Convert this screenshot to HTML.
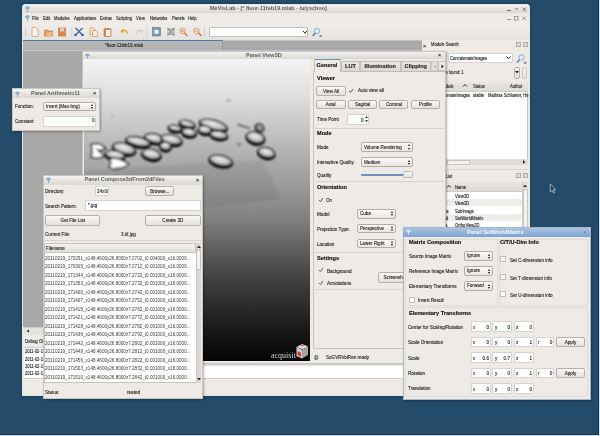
<!DOCTYPE html>
<html><head><meta charset="utf-8">
<style>
*{box-sizing:border-box;margin:0;padding:0}
.l,.t,.mi{-webkit-text-stroke:.12px #222}
body{width:600px;height:436px;background:#244c6a;position:relative;overflow:hidden;font-family:"Liberation Sans",sans-serif;font-size:4.6px;color:#222}
.a{position:absolute}
.win{position:absolute;background:#eeebe7;box-shadow:1px 1px 2px rgba(0,0,0,.3)}
.tb{position:absolute;background:linear-gradient(#f3f2f0,#dbd8d3)}
.tt{position:absolute;font-weight:bold;color:#5c5c5c;font-size:5.5px;white-space:nowrap;line-height:1}
.btn{position:absolute;padding-top:0;background:linear-gradient(#faf9f7,#e4e1dc);border:1px solid #b4b0aa;border-radius:2px;text-align:center;white-space:nowrap;color:#222}
.inp{position:absolute;background:#fff;border:1px solid #d6d3ce;border-radius:1px;white-space:nowrap}
.cmb{position:absolute;padding-top:.2px;background:linear-gradient(#fbfaf8,#e9e6e1);border:1px solid #b0aca6;border-radius:2px;white-space:nowrap;padding-left:2px}
.cmb:before{content:"";position:absolute;right:2px;top:50%;margin-top:-2.6px;border-left:1.6px solid transparent;border-right:1.6px solid transparent;border-bottom:2.1px solid #111}.cmb:after{content:"";position:absolute;right:2px;top:50%;margin-top:0.6px;border-left:1.6px solid transparent;border-right:1.6px solid transparent;border-top:2.1px solid #111}
.l{position:absolute;white-space:nowrap;color:#222;line-height:1;margin-top:.9px;font-size:5.2px;transform:scaleX(.885);transform-origin:0 0}
.v{transform-origin:100% 0}
.t{display:inline-block;font-size:5.2px;transform:scaleX(.885)}
.tl{transform-origin:0 50%}
.inp .t{position:relative;top:-.6px}
.b{position:absolute;white-space:nowrap;font-weight:bold;color:#111;font-size:5.6px;line-height:1;-webkit-text-stroke:.15px #111}
.sep{position:absolute;height:1px;background:#d6d3ce}
.ds{font-size:4.7px}
.mi{position:absolute;white-space:nowrap;color:#1a1a1a;line-height:1;top:15.6px;font-size:5.2px;transform:scaleX(.8);transform-origin:0 0}
#wrap{position:absolute;left:0;top:0;width:600px;height:436px;background:#244c6a;filter:blur(.3px)}
</style></head><body><div id="wrap">

<svg class="a" style="left:548px;top:182px" width="10" height="13"><path d="M2.3 2v8l1.9-1.7 1.3 2.7 1-.5-1.2-2.7 2.3-.2z" fill="#1e2f40" stroke="#a9bdcd" stroke-width=".9"/></svg>
<!-- ================= MAIN WINDOW ================= -->
<div class="win" style="left:22px;top:4px;width:508px;height:392px;border-radius:3px 3px 0 0;border:1px solid #dfe6ee;box-shadow:0 0 3px rgba(0,0,0,.35)"></div>
<div class="tb" style="left:23px;top:5px;width:506px;height:8px;border-radius:3px 3px 0 0"></div>
<div class="tt" style="left:210px;top:6.4px">MeVisLab - [* fluor-11feb19.mlab - /u/yschoo]</div>
<svg class="a" style="left:24px;top:5px" width="8" height="18"><g fill="#8fb0cc"><ellipse cx="3.5" cy="2.8" rx="2.4" ry="1.7"/><rect x="3" y="4" width="1.1" height="3.5"/><ellipse cx="3.5" cy="11.8" rx="2.4" ry="1.7"/><rect x="3" y="13" width="1.1" height="3.5"/></g></svg>
<svg class="a" style="left:505px;top:5px" width="24" height="18"><g fill="none" stroke="#555" stroke-width=".8"><path d="M2 5.5h4"/><path d="M10 4.5l1.5-1.5 1.5 1.5"/><path d="M17.5 2.5l3.5 3.5M21 2.5l-3.5 3.5"/></g><g fill="none" stroke="#888" stroke-width=".8"><path d="M2 14.5h4"/><rect x="9.5" y="11.5" width="3.5" height="3.5"/><path d="M17.5 11.5l3.5 3.5M21 11.5l-3.5 3.5"/></g></svg>
<!-- menubar -->
<div class="mi" style="left:31.7px">File</div>
<div class="mi" style="left:42.5px">Edit</div>
<div class="mi" style="left:54px">Modules</div>
<div class="mi" style="left:73.7px">Applications</div>
<div class="mi" style="left:100px">Extras</div>
<div class="mi" style="left:116.4px">Scripting</div>
<div class="mi" style="left:136.4px">View</div>
<div class="mi" style="left:149.6px">Networks</div>
<div class="mi" style="left:171.6px">Panels</div>
<div class="mi" style="left:188.4px">Help</div>

<!-- toolbar -->
<div class="a" style="left:22px;top:22.5px;width:508px;height:17px;background:linear-gradient(#efedea,#e6e3df)"></div>
<svg class="a" style="left:22px;top:22px;filter:blur(.3px)" width="300" height="18">
 <g fill="#b9b5ae"><rect x="3" y="5" width="1" height="1"/><rect x="3" y="7" width="1" height="1"/><rect x="3" y="9" width="1" height="1"/><rect x="3" y="11" width="1" height="1"/><rect x="3" y="13" width="1" height="1"/></g>
 <!-- new -->
 <path d="M10 5.5h4l2 2v7h-6z" fill="#fbf4ee" stroke="#e0a27a" stroke-width="0.9"/>
 <!-- open -->
 <path d="M22.5 8h3l1 1h4v5h-8z" fill="#e39a5e" stroke="#c2713a" stroke-width="0.6"/>
 <path d="M23.5 14l2-4h6l-2 4z" fill="#f2b57e"/>
 <!-- save -->
 <rect x="36.5" y="6" width="7" height="8" fill="#e0884a" stroke="#b86a36" stroke-width="0.6"/>
 <rect x="38" y="6.3" width="4" height="3" fill="#d8d8d8"/>
 <rect x="49.5" y="5" width="0.8" height="10" fill="#cfcbc5"/>
 <!-- cut -->
 <path d="M53.5 6l7 7M60.5 6l-7 7" stroke="#2d6aa8" stroke-width="1.3"/>
 <circle cx="53.5" cy="13" r="1.3" fill="#2d6aa8"/><circle cx="60.5" cy="13" r="1.3" fill="#2d6aa8"/>
 <!-- copy -->
 <path d="M68 6h3.5l1.5 1.5v5h-5z" fill="#fbeee2" stroke="#e0965e" stroke-width="0.8"/>
 <path d="M70.5 8.5h3.5l1.5 1.5v4.5h-5z" fill="#fbeee2" stroke="#e0965e" stroke-width="0.8"/>
 <!-- paste -->
 <rect x="82" y="6.5" width="7" height="8" rx="1" fill="#d98a50" stroke="#b86a36" stroke-width="0.6"/>
 <rect x="84" y="8" width="4.5" height="6" fill="#fbeee2"/>
 <!-- undo -->
 <path d="M100 9.5 Q104 6.5 105.5 11.5" fill="none" stroke="#e8a838" stroke-width="1.6"/>
 <path d="M98.3 8.2l3.8 -0.6 -1.6 4z" fill="#e0a030"/>
 <!-- redo -->
 <path d="M120 9.5 Q116 6.5 114.5 11.5" fill="none" stroke="#cfccc7" stroke-width="1.5"/>
 <path d="M121.7 8.2l-3.8 -0.6 1.6 4z" fill="#cfccc7"/>
 <rect x="124.5" y="5" width="0.8" height="10" fill="#cfcbc5"/>
 <!-- fit -->
 <rect x="130.5" y="5.5" width="8" height="8.5" fill="#7e98ad" stroke="#5f7a90" stroke-width="0.6"/>
 <circle cx="134.5" cy="9.7" r="2.3" fill="#f4f6f8"/>
 <!-- fit2 -->
 <path d="M145.5 6l7 7.5M152.5 6l-7 7.5" stroke="#8a8f8a" stroke-width="1.2"/>
 <rect x="146" y="7" width="6" height="5.5" fill="none" stroke="#8a8f8a" stroke-width="0.8"/>
 <!-- zoom in -->
 <circle cx="160.5" cy="9" r="2.7" fill="#fbeee2" stroke="#d88a50" stroke-width="0.9"/>
 <path d="M162.5 11l3 3" stroke="#c0703a" stroke-width="1.3"/>
 <path d="M159 9h3M160.5 7.5v3" stroke="#b06030" stroke-width="0.6"/>
 <!-- zoom out -->
 <circle cx="174.5" cy="9" r="2.7" fill="#fbeee2" stroke="#d88a50" stroke-width="0.9"/>
 <path d="M176.5 11l3 3" stroke="#c0703a" stroke-width="1.3"/>
 <path d="M173 9h3" stroke="#b06030" stroke-width="0.6"/>
 <rect x="182" y="5" width="0.8" height="10" fill="#cfcbc5"/>
 <!-- search icon -->
 <circle cx="295" cy="9" r="2.6" fill="#e4eef6" stroke="#7aa4c8" stroke-width="0.9"/>
 <path d="M293.2 11l-2.5 3" stroke="#4a7aa8" stroke-width="1.3"/>
 <path d="M297.5 13l1.6 1.6M299.1 13v1.6h-1.6" stroke="#333" stroke-width="0.6" fill="none"/>
</svg>
<div class="inp" style="left:209px;top:27px;width:99px;height:10px;border-color:#c4c0ba"></div>
<svg class="a" style="left:302px;top:29px" width="6" height="6"><path d="M1 2l2 2.2 2-2.2" fill="none" stroke="#222" stroke-width="1"/></svg>

<!-- tab bar -->
<div class="a" style="left:23px;top:40px;width:399px;height:11px;background:#a9a9a9;border-top:1px solid #c2c2c2"></div>
<div class="a" style="left:23px;top:40px;width:200px;height:11px;background:linear-gradient(#b9b9b9,#b1b1b1);border-top:1.5px solid #4f7aa6;border-right:1px solid #9a9a9a"></div>
<div class="a" style="left:23px;top:50px;width:399px;height:1px;background:#c6c6c6"></div>
<div class="l" style="left:105px;top:42.5px;font-size:5px;color:#222">*fluor-11feb19.mlab</div>
<div class="l" style="left:423px;top:42px;color:#777;font-size:6px">×</div>
<!-- MDI -->
<div class="a" style="left:23.3px;top:51px;width:406px;height:276px;background:#a8a8a8"></div>
<!-- MDI h-scrollbar -->
<div class="a" style="left:24px;top:327px;width:405px;height:8px;background:#e5e2dd;border-top:1px solid #cfccc7"></div>
<svg class="a" style="left:25px;top:328px" width="6" height="6"><path d="M4 1.5v3l-2.2-1.5z" fill="#222"/></svg>

<!-- Debug output dock -->
<div class="l" style="left:25px;top:339px;font-size:4.9px">Debug Output</div>
<div class="a" style="left:24px;top:347px;width:504px;height:32px;background:#fff;border-top:1px solid #cfccc7"></div>
<div class="l" style="left:25px;top:349.5px;font-size:4.5px">2011-02-19 17:16:51</div>
<div class="l" style="left:25px;top:357px;font-size:4.5px">2011-02-19 17:16:51</div>
<div class="l" style="left:25px;top:364px;font-size:4.5px">2011-02-19 17:16:52</div>
<div class="l" style="left:25px;top:371.5px;font-size:4.5px">2011-02-19 17:16:52</div>
<div class="a" style="left:24px;top:378px;width:504px;height:1px;background:#d0cdc8"></div>

<!-- Module Search dock -->
<div class="l ds" style="left:431px;top:42.5px">Module Search</div>
<div class="a" style="left:516px;top:42px;width:5px;height:5px;border:0.8px solid #b0aca6;background:#ddd9d4"></div>
<div class="a" style="left:523px;top:42px;width:5px;height:5px;border:0.8px solid #b0aca6;background:#ddd9d4"></div>
<div class="inp" style="left:447.5px;top:53px;width:65px;height:9.5px;padding-left:1.5px;line-height:9px"><span class="t tl" style="font-size:4.7px;top:-.2px">ConcatenateImages</span></div>
<svg class="a" style="left:505px;top:55px" width="7" height="6"><path d="M1.5 1.5l2 2.2 2-2.2" fill="none" stroke="#222" stroke-width="1"/></svg>
<svg class="a" style="left:515px;top:53px" width="13" height="12"><circle cx="6.5" cy="4.5" r="2.7" fill="#e4eef6" stroke="#7aa4c8" stroke-width="0.9"/><path d="M4.6 6.6l-2.6 3" stroke="#4a7aa8" stroke-width="1.3"/><path d="M9 8.5l1.8 1.8M10.8 8.5v1.8h-1.8" stroke="#333" stroke-width="0.6" fill="none"/></svg>
<div class="l ds" style="left:432px;top:70.5px">Modules found: 1</div>
<div class="btn" style="left:514px;top:66.5px;width:6px;height:12px"></div>
<svg class="a" style="left:514px;top:70px" width="6" height="5"><path d="M1 1h4l-2 2.5z" fill="#222"/></svg>
<div class="btn" style="left:521.5px;top:66.5px;width:5.5px;height:12px;opacity:.6"></div>
<div class="a" style="left:432px;top:81.5px;width:96px;height:78px;background:#fff;border:1px solid #c8c4be"></div>
<div class="a" style="left:432px;top:81.5px;width:96px;height:10px;background:linear-gradient(#eae7e3,#dedad5);border-bottom:1px solid #cfcbc5"></div>
<div class="l ds" style="left:440px;top:84.3px">Module</div>
<svg class="a" style="left:462px;top:83px" width="6" height="5"><path d="M1 3.5l2-2 2 2" fill="none" stroke="#222" stroke-width="1"/></svg>
<div class="l ds" style="left:473px;top:84.3px">Status</div>
<div class="l ds" style="left:510px;top:84.3px">Author</div>
<div class="l ds" style="left:433px;top:93.4px">ConcatenateImages</div>
<div class="l ds" style="left:472.5px;top:93.4px">stable</div>
<div class="l ds" style="left:488px;top:93.4px">Mathias Schlueter, He</div>
<div class="a" style="left:432px;top:159px;width:96px;height:6px;background:#e0ddd8"></div>
<div class="a" style="left:447px;top:159.5px;width:23px;height:5px;background:#f4f3f1;border:0.6px solid #c8c4be"></div>
<svg class="a" style="left:521px;top:159px" width="6" height="6"><path d="M2 1v4l2.2-2z" fill="#222"/></svg>
<div class="a" style="left:432px;top:168.5px;width:96px;height:1px;background:#d8d5d0"></div>
<div class="l ds" style="left:431px;top:174.0px">Module List</div>
<div class="a" style="left:516px;top:173px;width:5px;height:5px;border:0.8px solid #b0aca6;background:#ddd9d4"></div>
<div class="a" style="left:523px;top:173px;width:5px;height:5px;border:0.8px solid #b0aca6;background:#ddd9d4"></div>
<div class="a" style="left:432px;top:182px;width:96px;height:60px;background:#fff;border:1px solid #c8c4be"></div>
<div class="a" style="left:432px;top:182px;width:90px;height:9.5px;background:linear-gradient(#eae7e3,#dedad5);border-bottom:1px solid #cfcbc5"></div>
<svg class="a" style="left:446px;top:184px" width="6" height="5"><path d="M1 3.5l2-2 2 2" fill="none" stroke="#222" stroke-width="1"/></svg>
<div class="l ds" style="left:455px;top:185.5px">Name</div>
<div class="a" style="left:432px;top:199px;width:90px;height:7.3px;background:#efedea"></div>
<div class="a" style="left:432px;top:213.6px;width:90px;height:7.3px;background:#efedea"></div>
<div class="l ds" style="left:455px;top:194.5px">View3D</div>
<div class="l ds" style="left:455px;top:201.5px">View2D</div>
<div class="l ds" style="left:455px;top:209.0px">SubImage</div>
<div class="l ds" style="left:444px;top:209px">ga</div><div class="l ds" style="left:444.5px;top:216.5px">al</div><div class="l ds" style="left:445px;top:223.5px">a</div>
<div class="l ds" style="left:455px;top:216.5px">SetWorldMatrix</div>
<div class="l ds" style="left:455px;top:223.5px">OrthoView2D</div>
<div class="a" style="left:522px;top:182px;width:6px;height:60px;background:#e3e0db;border-left:1px solid #d0ccc6"></div>
<svg class="a" style="left:522px;top:183px" width="6" height="6"><path d="M1 4l2-2.2 2 2.2z" fill="#222"/></svg>
<div class="a" style="left:522.5px;top:189px;width:5px;height:40px;background:#f4f3f1;border:0.6px solid #c8c4be"></div>

<!-- main status bar -->
<div class="a" style="left:23px;top:379px;width:506px;height:16px;background:#eeebe7"></div>


<!-- ================= PANEL VIEW3D ================= -->
<div class="win" style="left:81.5px;top:50.5px;width:364.5px;height:313.5px;border:1px solid #c9c6c1;background:#eeebe7"></div>
<div class="tb" style="left:82.5px;top:51.5px;width:362.5px;height:7.5px"></div>
<div class="tt" style="left:246px;top:52.5px">Panel View3D</div>
<svg class="a" style="left:84px;top:51.5px" width="8" height="8"><ellipse cx="3.5" cy="3" rx="2.3" ry="1.6" fill="#8aaccc"/><rect x="3" y="4" width="1" height="3" fill="#8aaccc"/></svg>
<div class="l" style="left:438px;top:51.5px;color:#555;font-size:6px">×</div>
<!-- viewer -->
<div class="a" style="left:83.5px;top:59px;width:226px;height:302px;background:linear-gradient(#f4f4f4 0%,#dcdcdc 13.6%,#adadad 33%,#989898 43%,#808080 53%,#5f5f5f 63%,#404040 73%,#181818 90%,#050505 100%)"></div>
<svg class="a" style="left:83.5px;top:59px" width="226" height="302">
 <defs>
  <radialGradient id="dg" cx="0.45" cy="0.35" r="0.65"><stop offset="0" stop-color="#ececec"/><stop offset="0.55" stop-color="#cdcdcd"/><stop offset="1" stop-color="#8a8a8a"/></radialGradient>
  <radialGradient id="dw" cx="0.45" cy="0.4" r="0.6"><stop offset="0" stop-color="#ffffff"/><stop offset="0.7" stop-color="#e8e8e8"/><stop offset="1" stop-color="#5a5a5a"/></radialGradient>
  <filter id="bl" x="-10%" y="-10%" width="120%" height="120%"><feGaussianBlur stdDeviation="1"/></filter><filter id="bl2"><feGaussianBlur stdDeviation="3"/></filter>
 </defs>
 <g transform="translate(-83.5,-59)">
 <path d="M83.5 170 L262 160 L281 199 L83.5 222z" fill="#000" opacity="0.06" filter="url(#bl)"/>
 <g filter="url(#bl)">
  <g transform="rotate(10 174.6 128.6)"><ellipse cx="174.6" cy="129.2" rx="7.6" ry="4.5" fill="#111"/><ellipse cx="174.4" cy="128.1" rx="6.1" ry="2.4" fill="url(#dg)" stroke="#222" stroke-width="1.2"/></g>
  <g transform="rotate(15 186.8 124.2)"><ellipse cx="186.8" cy="124.8" rx="8.8" ry="4.8" fill="#111"/><ellipse cx="186.60000000000002" cy="123.7" rx="7.3" ry="2.7" fill="url(#dg)" stroke="#222" stroke-width="1.2"/></g>
  <g transform="rotate(15 213 125.4)"><ellipse cx="213" cy="126.0" rx="15.1" ry="6.4" fill="#111"/><ellipse cx="212.8" cy="124.9" rx="13.6" ry="4.3" fill="url(#dg)" stroke="#222" stroke-width="1.2"/></g>
  <g transform="rotate(10 204.3 130)"><ellipse cx="204.3" cy="130.6" rx="7.6" ry="5.6" fill="#111"/><ellipse cx="204.10000000000002" cy="129.5" rx="6.1" ry="3.5" fill="url(#dg)" stroke="#222" stroke-width="1.2"/></g>
  <g transform="rotate(10 188.6 132.7)"><ellipse cx="188.6" cy="133.29999999999998" rx="8.2" ry="5.6" fill="#111"/><ellipse cx="188.4" cy="132.2" rx="6.7" ry="3.5" fill="url(#dg)" stroke="#222" stroke-width="1.2"/></g>
  <g transform="rotate(10 218.3 135.3)"><ellipse cx="218.3" cy="135.9" rx="9.9" ry="5.4" fill="#111"/><ellipse cx="218.10000000000002" cy="134.8" rx="8.4" ry="3.3" fill="url(#dg)" stroke="#222" stroke-width="1.2"/></g>
  <g transform="rotate(12 153.7 138.7)"><ellipse cx="153.7" cy="139.29999999999998" rx="10.6" ry="6.1" fill="#111"/><ellipse cx="153.5" cy="138.2" rx="9.1" ry="4.0" fill="url(#dg)" stroke="#222" stroke-width="1.2"/></g>
  <g transform="rotate(12 171 140)"><ellipse cx="171" cy="140.6" rx="11.6" ry="6.4" fill="#111"/><ellipse cx="170.8" cy="139.5" rx="10.1" ry="4.3" fill="url(#dg)" stroke="#222" stroke-width="1.2"/></g>
  <g transform="rotate(12 137.7 142)"><ellipse cx="137.7" cy="142.6" rx="13.3" ry="6.1" fill="#111"/><ellipse cx="137.5" cy="141.5" rx="11.8" ry="4.0" fill="url(#dg)" stroke="#222" stroke-width="1.2"/></g>
  <g transform="rotate(15 123.7 149)"><ellipse cx="123.7" cy="149.6" rx="12.6" ry="6.9" fill="#111"/><ellipse cx="123.5" cy="148.5" rx="11.1" ry="4.8" fill="url(#dg)" stroke="#222" stroke-width="1.2"/></g>
  <g transform="rotate(10 165 146.5)"><ellipse cx="165" cy="147.1" rx="6.6" ry="5.6" fill="#111"/><ellipse cx="164.8" cy="146.0" rx="5.1" ry="3.5" fill="url(#dg)" stroke="#222" stroke-width="1.2"/></g>
  <g transform="rotate(12 151 154.7)"><ellipse cx="151" cy="155.29999999999998" rx="10.6" ry="6.6" fill="#111"/><ellipse cx="150.8" cy="154.2" rx="9.1" ry="4.5" fill="url(#dg)" stroke="#222" stroke-width="1.2"/></g>
  <g transform="rotate(10 114.7 155.3)"><ellipse cx="114.7" cy="155.9" rx="10.9" ry="5.9" fill="#111"/><ellipse cx="114.5" cy="154.8" rx="9.4" ry="3.8" fill="url(#dg)" stroke="#222" stroke-width="1.2"/></g>
  <g transform="rotate(15 255 138)"><ellipse cx="255" cy="138.6" rx="10.2" ry="7.1" fill="#111"/><ellipse cx="254.8" cy="137.5" rx="8.7" ry="5.0" fill="url(#dg)" stroke="#222" stroke-width="1.2"/></g>
  <g transform="rotate(15 266 153)"><ellipse cx="266" cy="153.6" rx="9.6" ry="6.6" fill="#111"/><ellipse cx="265.8" cy="152.5" rx="8.1" ry="4.5" fill="url(#dg)" stroke="#222" stroke-width="1.2"/></g>
  <g transform="rotate(12 220.3 161)"><ellipse cx="220.3" cy="161.6" rx="12.6" ry="6.8" fill="#111"/><ellipse cx="220.10000000000002" cy="160.5" rx="11.1" ry="4.7" fill="url(#dg)" stroke="#222" stroke-width="1.2"/></g>
  <g transform="rotate(35 259 128)"><ellipse cx="259" cy="128" rx="5.2" ry="4.6" fill="#1a1a1a"/><ellipse cx="259" cy="127.5" rx="3.3" ry="2.6" fill="#9a9a9a"/></g>
  <path d="M90.5 144.5 Q99 142 105 148.5 Q101 151 97.5 150 L104 156.5 Q97 159 90.5 157 Q93 151 90.5 144.5z" fill="#fff" stroke="#1a1a1a" stroke-width="1.5"/>
  <path d="M108.5 159 Q117 156 128 164 Q124 168 118 168 Q112 170 108.5 167 Q112 163 108.5 159z" fill="#fff" stroke="#1a1a1a" stroke-width="1.5"/>
  <path d="M237 124.5 L249.5 128.5" stroke="#555" stroke-width="1.4"/>
  <ellipse cx="238.5" cy="144.3" rx="2.5" ry="1.4" fill="#777"/>
  <ellipse cx="228" cy="100.4" rx="2" ry="1.2" fill="#999"/>
  <ellipse cx="112" cy="116.7" rx="2" ry="1.5" fill="#bbb"/>
 </g>
</g>
 <text x="187" y="299" font-family="Liberation Serif" font-size="8" fill="#d8d8d8">acquisit</text>
 <path d="M212.5 288l5.5-3 6 2.5-5.5 3z" fill="#e0d8d8"/>
 <path d="M212.5 288l5.5 3v8.5l-5.5-2.5z" fill="#d4d0d0"/>
 <path d="M218 291l6-3.5v8.5l-6 3.5z" fill="#a8a4a4"/>
 <path d="M213.5 292l3.5 1.8v4l-3.5-1.8z" fill="#d83838"/>
 <path d="M216 286.5l2-1 2 1-2 1z" fill="#d85050"/>
</svg>
<!-- control side -->
<div class="a" style="left:313px;top:71px;width:132.5px;height:278px;border:1px solid #c8c4be;border-top-color:#bfbbb5"></div>
<div class="a" style="left:341px;top:60.5px;width:19px;height:10.5px;background:linear-gradient(#e8e6e2,#dcd9d4);border:1px solid #c4c0ba;border-bottom:0"></div>
<div class="a" style="left:360px;top:60.5px;width:41px;height:10.5px;background:linear-gradient(#e8e6e2,#dcd9d4);border:1px solid #c4c0ba;border-bottom:0"></div>
<div class="a" style="left:401px;top:60.5px;width:29.5px;height:10.5px;background:linear-gradient(#e8e6e2,#dcd9d4);border:1px solid #c4c0ba;border-bottom:0"></div>
<div class="a" style="left:430.5px;top:60.5px;width:7.5px;height:10.5px;background:#e4e1dc;border:1px solid #cfcbc5"></div>
<div class="a" style="left:438px;top:60.5px;width:7.5px;height:10.5px;background:#eeece8;border:1px solid #c4c0ba"></div>
<svg class="a" style="left:430.5px;top:60.5px" width="15" height="11"><path d="M5 3.5v4l-2-2z" fill="#bbb"/><path d="M10.5 3.5v4l2.2-2z" fill="#111"/></svg>
<div class="a" style="left:313.5px;top:59.3px;width:27.5px;height:12.5px;background:#eeebe7;border:1px solid #c4c0ba;border-bottom:0;border-top:1.5px solid #6a92c0"></div>
<div class="b" style="left:316.6px;top:63.4px">General</div>
<div class="b" style="left:345px;top:63.6px;color:#333">LUT</div>
<div class="b" style="left:364.5px;top:63.6px;color:#333">Illumination</div>
<div class="b" style="left:404.6px;top:63.6px;color:#333">Clipping</div>

<div class="b" style="left:317px;top:75.5px">Viewer</div>
<div class="btn" style="left:316px;top:86px;width:29.6px;height:10px;line-height:8px"><span class="t">View All</span></div>
<svg class="a" style="left:348px;top:88px" width="6" height="6"><path d="M1 3l1.5 1.5 2.5-3.5" fill="none" stroke="#333" stroke-width="0.8"/></svg>
<div class="l" style="left:358px;top:87.6px">Auto view all</div>
<div class="btn" style="left:316px;top:99.7px;width:29.6px;height:9.6px;line-height:7.6px"><span class="t">Axial</span></div>
<div class="btn" style="left:348px;top:99.7px;width:29px;height:9.6px;line-height:7.6px"><span class="t">Sagittal</span></div>
<div class="btn" style="left:379.4px;top:99.7px;width:29px;height:9.6px;line-height:7.6px"><span class="t">Coronal</span></div>
<div class="btn" style="left:410.8px;top:99.7px;width:29.2px;height:9.6px;line-height:7.6px"><span class="t">Profile</span></div>
<div class="l" style="left:317px;top:116.5px">Time Point</div>
<div class="inp" style="left:347px;top:114px;width:22px;height:10.5px"></div>
<div class="l" style="left:361px;top:117px">0</div>
<svg class="a" style="left:364px;top:114px" width="5" height="10"><path d="M1 4l1.5-2 1.5 2zM1 6l1.5 2 1.5-2z" fill="#333"/></svg>
<div class="sep" style="left:315px;top:127.5px;width:129px"></div>
<div class="b" style="left:317px;top:131px">Mode</div>
<div class="l" style="left:317px;top:144.3px">Mode</div>
<div class="cmb" style="left:361px;top:142px;width:51.5px;height:10px;line-height:8px"><span class="t tl">Volume Rendering</span></div>
<div class="l" style="left:316.6px;top:159.3px">Interactive Quality</div>
<div class="cmb" style="left:361px;top:157px;width:51.5px;height:10.3px;line-height:8.3px"><span class="t tl">Medium</span></div>
<div class="l" style="left:317px;top:172.6px">Quality</div>
<div class="a" style="left:361px;top:173.5px;width:44px;height:2px;background:#6f94bb;border-radius:1px"></div>
<div class="a" style="left:403px;top:171px;width:9.5px;height:6.5px;background:linear-gradient(#fbfaf8,#e6e3de);border:1px solid #bdb9b3;border-radius:1.5px"></div>
<div class="sep" style="left:315px;top:181px;width:129px"></div>
<div class="b" style="left:317px;top:184.5px">Orientation</div>
<svg class="a" style="left:318px;top:196.5px" width="6" height="6"><path d="M1 3l1.5 1.5 2.5-3.5" fill="none" stroke="#333" stroke-width="0.8"/></svg>
<div class="l" style="left:326px;top:197.5px">On</div>
<div class="l" style="left:317px;top:211px">Model</div>
<div class="cmb" style="left:357px;top:209px;width:39px;height:9.5px;line-height:7.5px"><span class="t tl">Cube</span></div>
<div class="l" style="left:317px;top:225.8px">Projection Type:</div>
<div class="cmb" style="left:357px;top:223.8px;width:39px;height:9.7px;line-height:7.7px"><span class="t tl">Perspective</span></div>
<div class="l" style="left:317px;top:240.8px">Location</div>
<div class="cmb" style="left:357px;top:238.8px;width:39px;height:9.7px;line-height:7.7px"><span class="t tl">Lower Right</span></div>
<div class="sep" style="left:315px;top:252px;width:129px"></div>
<div class="b" style="left:317px;top:255.5px">Settings</div>
<svg class="a" style="left:318px;top:267px" width="6" height="6"><path d="M1 3l1.5 1.5 2.5-3.5" fill="none" stroke="#333" stroke-width="0.8"/></svg>
<div class="l" style="left:326.7px;top:268px">Background</div>
<svg class="a" style="left:318px;top:279.5px" width="6" height="6"><path d="M1 3l1.5 1.5 2.5-3.5" fill="none" stroke="#333" stroke-width="0.8"/></svg>
<div class="l" style="left:326.7px;top:280.5px">Annotations</div>
<div class="btn" style="left:377.5px;top:271.7px;width:40px;height:11px;line-height:9px;text-align:left;padding-left:3px"><span class="t">Screenshot</span></div>
<div class="sep" style="left:315px;top:288.6px;width:129px"></div>
<div class="l" style="left:313.5px;top:354.5px;color:#555">@</div>
<div class="l" style="left:326px;top:354.5px">SoGVRVolRen ready</div>

<!-- ================= PANEL ARITHMETIC ================= -->
<div class="win" style="left:11.5px;top:88px;width:88.5px;height:43px;border:1px solid #c9c6c1"></div>
<div class="tb" style="left:12.5px;top:89px;width:86.5px;height:9px"></div>
<div class="tt" style="left:31px;top:90.5px">Panel Arithmetic11</div>
<svg class="a" style="left:14px;top:89.5px" width="8" height="8"><ellipse cx="3.5" cy="3" rx="2.3" ry="1.6" fill="#8aaccc"/><rect x="3" y="4" width="1" height="3" fill="#8aaccc"/></svg>
<div class="l" style="left:93px;top:89.5px;color:#555;font-size:6px">×</div>
<div class="l" style="left:14.7px;top:103.5px">Function:</div>
<div class="cmb" style="left:42.5px;top:101.6px;width:53.5px;height:9.5px;line-height:7.5px"><span class="t tl">Invert (Max-Img)</span></div>
<div class="l" style="left:14.7px;top:118.5px">Constant:</div>
<div class="inp" style="left:42.5px;top:115.8px;width:53.5px;height:11px"></div>
<div class="l" style="left:91.5px;top:117.3px">0</div>

<!-- ================= PANEL COMPOSE ================= -->
<div class="win" style="left:42.5px;top:174.6px;width:160.5px;height:224px;border:1px solid #c9c6c1"></div>
<div class="tb" style="left:43.5px;top:175.6px;width:158.5px;height:9px"></div>
<div class="tt" style="left:84.5px;top:177px">Panel Compose3dFrom2dFiles</div>
<svg class="a" style="left:45px;top:176px" width="8" height="8"><ellipse cx="3.5" cy="3" rx="2.3" ry="1.6" fill="#8aaccc"/><rect x="3" y="4" width="1" height="3" fill="#8aaccc"/></svg>
<div class="l" style="left:196px;top:176px;color:#555;font-size:6px">×</div>
<div class="l" style="left:45px;top:188.3px">Directory:</div>
<div class="inp" style="left:95.3px;top:185.5px;width:14px;height:10.8px;overflow:hidden;padding-left:1px;line-height:9.6px"><span class="t tl" style="top:0">24x0/</span></div>
<div class="btn" style="left:145.4px;top:186px;width:29px;height:10px;line-height:8px"><span class="t">Browse...</span></div>
<div class="l" style="left:45px;top:203.3px">Search Pattern:</div>
<div class="inp" style="left:84.5px;top:200.4px;width:116px;height:10.2px;padding-left:2px;line-height:8.2px"><span class="t tl">*.jpg</span></div>
<div class="btn" style="left:44.6px;top:215px;width:55.8px;height:10.6px;line-height:8.6px"><span class="t">Get File List</span></div>
<div class="btn" style="left:145.4px;top:215px;width:55.6px;height:10.6px;line-height:8.6px"><span class="t">Create 3D</span></div>
<div class="l" style="left:45px;top:231.2px">Current File:</div>
<div class="l" style="left:120.5px;top:231.2px">3.tif.jpg</div>
<div class="sep" style="left:44px;top:240px;width:157px"></div>
<div class="a" style="left:44px;top:243px;width:157px;height:140px;background:#fff;border:1px solid #c8c4be"></div>
<div class="a" style="left:44px;top:243px;width:151.5px;height:9.5px;background:linear-gradient(#f2f0ed,#e2dfda);border:1px solid #c8c4be"></div>
<div class="l" style="left:46px;top:245.5px">Filename</div>
<div class="a" style="left:195.5px;top:243px;width:5.5px;height:140px;background:#dcd8d1;border-left:1px solid #cfcbc5"></div>
<div class="a" style="left:195.8px;top:250px;width:5px;height:20px;background:#f4f3f1;border:0.6px solid #c4c0ba"></div>
<svg class="a" style="left:195.5px;top:243px" width="6" height="140"><path d="M1 5l2-2.2 2 2.2z" fill="#222"/><path d="M1 135l2 2.2 2-2.2z" fill="#222"/></svg>
<div id="rows" class="a" style="left:45px;top:254.5px;width:149px;overflow:hidden;line-height:8.5px;font-size:4.6px;color:#3a3a3a">
20110219_170251_x148.4600y26.8000z7.2702_t0.004000_x16.0000...<br>
20110219_170305_x148.4600y26.8000z7.2712_t0.001000_x16.0000...<br>
20110219_171344_x148.4600y26.8000z7.2722_t0.001000_x16.0000...<br>
20110219_171353_x148.4600y26.8000z7.2732_t0.001000_x16.0000...<br>
20110219_171400_x148.4600y26.8000z7.2742_t0.001000_x16.0000...<br>
20110219_171407_x148.4600y26.8000z7.2752_t0.001000_x16.0000...<br>
20110219_171415_x148.4600y26.8000z7.2762_t0.001000_x16.0000...<br>
20110219_171421_x148.4600y26.8000z7.2772_t0.001000_x16.0000...<br>
20110219_171428_x148.4600y26.8000z7.2782_t0.001000_x16.0000...<br>
20110219_171436_x148.4600y26.8000z7.2792_t0.001000_x16.0000...<br>
20110219_171442_x148.4600y26.8000z7.2802_t0.001000_x16.0000...<br>
20110219_171449_x148.4600y26.8000z7.2812_t0.001000_x16.0000...<br>
20110219_171456_x148.4600y26.8000z7.2822_t0.001000_x16.0000...<br>
20110219_171503_x148.4600y26.8000z7.2832_t0.001000_x16.0000...<br>
20110219_171510_x148.4600y26.8000z7.2842_t0.001000_x16.0000...
</div>
<div class="l" style="left:45px;top:389px">Status:</div>
<div class="l" style="left:126.5px;top:389px">reated</div>

<!-- ================= PANEL SETWORLDMATRIX ================= -->
<div class="win" style="left:402.7px;top:227px;width:188.3px;height:173px;border:1px solid #a9b6c6"></div>
<div class="a" style="left:403.2px;top:227.5px;width:187.3px;height:9.5px;background:linear-gradient(#a9c3e4,#7fa3d2);border-radius:2px 2px 0 0"></div>
<div class="tt" style="left:467px;top:229.5px;color:#f4f8fc">Panel SetWorldMatrix</div>
<svg class="a" style="left:405px;top:228px" width="8" height="8"><ellipse cx="3.5" cy="3" rx="2.3" ry="1.6" fill="#d4e4f4"/><rect x="3" y="4" width="1" height="3" fill="#d4e4f4"/></svg>
<div class="l" style="left:582.5px;top:228.3px;color:#eef;font-size:6px">×</div>
<div class="a" style="left:404.5px;top:238.5px;width:93.5px;height:67px;border:1px solid #e0ddd8;border-radius:1px"></div>
<div class="a" style="left:498.5px;top:238.5px;width:89.5px;height:67px;border:1px solid #e0ddd8;border-radius:1px"></div>
<div class="a" style="left:404.5px;top:307px;width:183.5px;height:90px;border:1px solid #e0ddd8;border-radius:1px"></div>
<div class="b" style="left:409px;top:240px">Matrix Composition</div>
<div class="b" style="left:500px;top:240px">C/T/U-Dim Info</div>
<div class="l" style="left:408.5px;top:253px">Source Image Matrix</div>
<div class="cmb" style="left:464px;top:251.3px;width:29px;height:9.7px;line-height:7.7px"><span class="t tl">Ignore</span></div>
<div class="l" style="left:408.5px;top:268px">Reference Image Matrix</div>
<div class="cmb" style="left:464px;top:266.3px;width:29px;height:9.7px;line-height:7.7px"><span class="t tl">Ignore</span></div>
<div class="l" style="left:408.5px;top:283px">Elementary Transforms</div>
<div class="cmb" style="left:464px;top:281.3px;width:29px;height:9.7px;line-height:7.7px"><span class="t tl">Forward</span></div>
<div class="a" style="left:409.3px;top:297px;width:5.8px;height:5.8px;background:#fff;border:0.8px solid #c4c0ba;border-radius:.5px"></div>
<div class="l" style="left:418px;top:297px">Invert Result</div>

<div class="a" style="left:500.3px;top:256.4px;width:5.8px;height:5.8px;background:#fff;border:0.8px solid #c4c0ba;border-radius:.5px"></div>
<div class="l" style="left:510px;top:257px">Set C-dimension info</div>
<div class="a" style="left:500.3px;top:274px;width:5.8px;height:5.8px;background:#fff;border:0.8px solid #c4c0ba;border-radius:.5px"></div>
<div class="l" style="left:510px;top:274.7px">Set T-dimension info</div>
<div class="a" style="left:500.3px;top:291.4px;width:5.8px;height:5.8px;background:#fff;border:0.8px solid #c4c0ba;border-radius:.5px"></div>
<div class="l" style="left:510px;top:292px">Set U-dimension info</div>

<div class="b" style="left:409px;top:310.5px">Elementary Transforms</div>
<div class="l" style="left:408.3px;top:323.8px">Center for Scaling/Rotation</div>
<div class="l" style="left:408.3px;top:339.5px">Scale Orientation</div>
<div class="l" style="left:408.3px;top:355px">Scale</div>
<div class="l" style="left:408.3px;top:370.2px">Rotation</div>
<div class="l" style="left:408.3px;top:385.5px">Translation</div>
<div class="inp" style="left:471px;top:321px;width:20px;height:10.7px"></div><div class="l" style="left:473.2px;top:324.0px;color:#333">x</div><div class="l v" style="left:471px;top:324px;width:18px;text-align:right">0</div>
<div class="inp" style="left:492.3px;top:321px;width:20px;height:10.7px"></div><div class="l" style="left:494.5px;top:324.0px;color:#333">y</div><div class="l v" style="left:492.3px;top:324px;width:18px;text-align:right">0</div>
<div class="inp" style="left:514px;top:321px;width:20px;height:10.7px"></div><div class="l" style="left:516.2px;top:324.0px;color:#333">z</div><div class="l v" style="left:514px;top:324px;width:18px;text-align:right">0</div>
<div class="inp" style="left:471px;top:336.5px;width:20px;height:10.7px"></div><div class="l" style="left:473.2px;top:339.5px;color:#333">x</div><div class="l v" style="left:471px;top:339.5px;width:18px;text-align:right">0</div>
<div class="inp" style="left:492.3px;top:336.5px;width:20px;height:10.7px"></div><div class="l" style="left:494.5px;top:339.5px;color:#333">y</div><div class="l v" style="left:492.3px;top:339.5px;width:18px;text-align:right">0</div>
<div class="inp" style="left:514px;top:336.5px;width:20px;height:10.7px"></div><div class="l" style="left:516.2px;top:339.5px;color:#333">z</div><div class="l v" style="left:514px;top:339.5px;width:18px;text-align:right">1</div>
<div class="inp" style="left:535.7px;top:336.5px;width:18.3px;height:10.7px"></div><div class="l" style="left:537.9px;top:339.5px;color:#333">r</div><div class="l v" style="left:535.7px;top:339.5px;width:16.3px;text-align:right">0</div>
<div class="btn" style="left:555.7px;top:336.7px;width:29.3px;height:10.6px;line-height:8.6px"><span class="t">Apply</span></div>
<div class="inp" style="left:471px;top:352px;width:20px;height:10.7px"></div><div class="l" style="left:473.2px;top:355.0px;color:#333">x</div><div class="l v" style="left:471px;top:355px;width:18px;text-align:right">0.6</div>
<div class="inp" style="left:492.3px;top:352px;width:20px;height:10.7px"></div><div class="l" style="left:494.5px;top:355.0px;color:#333">y</div><div class="l v" style="left:492.3px;top:355px;width:18px;text-align:right">0.7</div>
<div class="inp" style="left:514px;top:352px;width:20px;height:10.7px"></div><div class="l" style="left:516.2px;top:355.0px;color:#333">z</div><div class="l v" style="left:514px;top:355px;width:18px;text-align:right">1</div>
<div class="inp" style="left:471px;top:367.5px;width:20px;height:10.7px"></div><div class="l" style="left:473.2px;top:370.5px;color:#333">x</div><div class="l v" style="left:471px;top:370.5px;width:18px;text-align:right">0</div>
<div class="inp" style="left:492.3px;top:367.5px;width:20px;height:10.7px"></div><div class="l" style="left:494.5px;top:370.5px;color:#333">y</div><div class="l v" style="left:492.3px;top:370.5px;width:18px;text-align:right">0</div>
<div class="inp" style="left:514px;top:367.5px;width:20px;height:10.7px"></div><div class="l" style="left:516.2px;top:370.5px;color:#333">z</div><div class="l v" style="left:514px;top:370.5px;width:18px;text-align:right">1</div>
<div class="inp" style="left:535.7px;top:367.5px;width:18.3px;height:10.7px"></div><div class="l" style="left:537.9px;top:370.5px;color:#333">r</div><div class="l v" style="left:535.7px;top:370.5px;width:16.3px;text-align:right">0</div>
<div class="btn" style="left:555.7px;top:367.7px;width:29.3px;height:10.6px;line-height:8.6px"><span class="t">Apply</span></div>
<div class="inp" style="left:471px;top:383px;width:20px;height:10.7px"></div><div class="l" style="left:473.2px;top:386.0px;color:#333">x</div><div class="l v" style="left:471px;top:386px;width:18px;text-align:right">0</div>
<div class="inp" style="left:492.3px;top:383px;width:20px;height:10.7px"></div><div class="l" style="left:494.5px;top:386.0px;color:#333">y</div><div class="l v" style="left:492.3px;top:386px;width:18px;text-align:right">0</div>
<div class="inp" style="left:514px;top:383px;width:20px;height:10.7px"></div><div class="l" style="left:516.2px;top:386.0px;color:#333">z</div><div class="l v" style="left:514px;top:386px;width:18px;text-align:right">0</div>


</div>
<div class="a" style="left:598px;top:0;width:1px;height:435px;background:#17334a"></div><div class="a" style="left:599px;top:0;width:1px;height:436px;background:#cfe2ee"></div><div class="a" style="left:0;top:434px;width:599px;height:1px;background:#17334a"></div><div class="a" style="left:0;top:435px;width:600px;height:1px;background:#cfe2ee"></div>
</body></html>
